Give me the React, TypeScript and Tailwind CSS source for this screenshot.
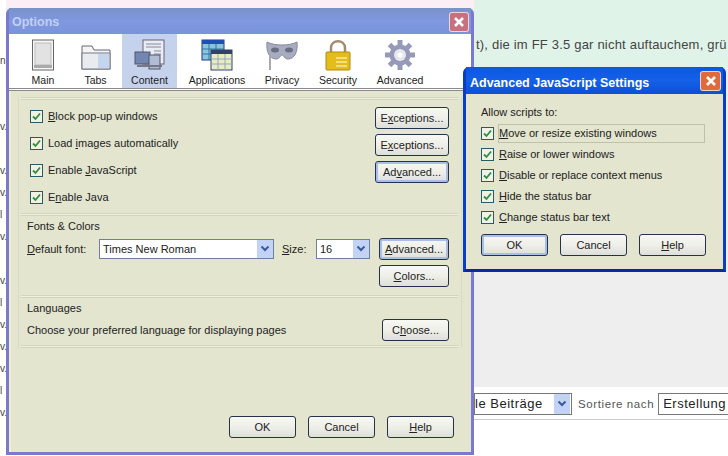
import type { ReactNode } from "react";

const face = "font-['Liberation_Sans',Arial,sans-serif]";

function Btn({ w, h = 22, def, children }: { w: string; h?: number; def?: boolean; children: ReactNode }) {
  return (
    <div
      className={`${w} flex shrink-0 items-center justify-center rounded-[3px] border border-[#26324a] bg-gradient-to-b from-[#f8f8f4] via-[#efefe9] to-[#dedfd8] text-[11px] text-[#222] ${def ? "shadow-[inset_0_0_0_2px_#a9bfe8]" : ""}`}
      style={{ height: h }}
    >
      {children}
    </div>
  );
}

function Check() {
  return (
    <span className="flex h-[13px] w-[13px] shrink-0 items-center justify-center border border-[#2c5a62] bg-[#f1f1e6]">
      <svg width="9" height="9" viewBox="0 0 9 9">
        <path d="M1 4.5 L3.5 7 L8 1.5" fill="none" stroke="#2f8f3f" strokeWidth="1.8" />
      </svg>
    </span>
  );
}

function Arrow({ w = 16 }: { w?: number }) {
  return (
    <span className="flex h-full shrink-0 items-center justify-center bg-[#c3d3f5]" style={{ width: w }}>
      <svg width="10" height="8" viewBox="0 0 10 8">
        <path d="M1.5 1.5 L5 5 L8.5 1.5" fill="none" stroke="#3b5aa0" strokeWidth="2" />
      </svg>
    </span>
  );
}

function Tab({ w, label, active, children }: { w: string; label: string; active?: boolean; children: ReactNode }) {
  return (
    <div className={`${w} flex h-[54px] shrink-0 flex-col items-center ${active ? "bg-[#c5d2ec]" : ""}`}>
      <div className="mt-[5px] h-[33px]">{children}</div>
      <span className="mt-[2px] text-[10.5px] leading-[13px] text-[#222]">{label}</span>
    </div>
  );
}

function Row({ children, mt }: { children: ReactNode; mt: string }) {
  return (
    <div className={`flex items-center gap-[5px] ${mt} h-[13px] text-[11px] text-[#222]`}>
      <Check />
      <span>{children}</span>
    </div>
  );
}

const MainIcon = (
  <svg width="24" height="32" viewBox="0 0 24 32">
    <rect x="1.5" y="1" width="21" height="30" fill="#f6f6f6" stroke="#666" />
    <rect x="4" y="4" width="16" height="22" fill="#e2e2e2" stroke="#bbb" />
    <rect x="3" y="26" width="18" height="3" fill="#aaa" />
  </svg>
);
const TabsIcon = (
  <svg width="30" height="28" viewBox="0 0 30 28" className="mt-[3px]">
    <path d="M1 4 H11 L13 8 H29 V27 H1 Z" fill="#f4f4f4" stroke="#667" />
    <rect x="1" y="11" width="28" height="16" fill="#e8ecee" stroke="#778" />
    <rect x="17" y="12" width="11" height="14" fill="#c4d6ee" />
  </svg>
);
const ContentIcon = (
  <svg width="32" height="32" viewBox="0 0 32 32">
    <rect x="9" y="1" width="21" height="24" fill="#e8edf5" stroke="#667" />
    <path d="M12 5 H27 M12 8 H27 M20 12 H27 M20 15 H27" stroke="#889" />
    <rect x="1" y="13" width="15" height="12" fill="#7186b0" stroke="#556" />
    <rect x="15" y="16" width="11" height="14" fill="#aebcd6" stroke="#556" />
    <path d="M3 27 H28" stroke="#778" strokeWidth="2" />
  </svg>
);
const AppsIcon = (
  <svg width="32" height="32" viewBox="0 0 32 32">
    <rect x="1" y="1" width="22" height="20" fill="#8cc4e0" stroke="#1e3a8a" />
    <rect x="1" y="1" width="22" height="4" fill="#1e50b8" />
    <path d="M1 10 H23 M1 15 H23 M8 5 V21 M15 5 V21" stroke="#2a7aa0" />
    <rect x="10" y="11" width="21" height="20" fill="#e6ecc4" stroke="#33406a" />
    <rect x="10" y="11" width="21" height="4" fill="#33406a" />
    <path d="M10 20 H31 M10 25 H31 M17 15 V31 M24 15 V31" stroke="#9aa5b4" />
  </svg>
);
const PrivacyIcon = (
  <svg width="34" height="32" viewBox="0 0 34 32">
    <path d="M2 3 C9 7 25 7 32 3 C33 12 30 20 23 20 C19 20 19 16 17 16 C15 16 15 20 11 20 C4 20 1 12 2 3 Z" fill="#a8acc0" stroke="#8a8a9a" />
    <ellipse cx="10" cy="11" rx="4" ry="2.5" fill="#6a6e82" />
    <ellipse cx="24" cy="11" rx="4" ry="2.5" fill="#6a6e82" />
    <path d="M5 16 V31" stroke="#aaa" strokeWidth="2" />
  </svg>
);
const SecurityIcon = (
  <svg width="28" height="32" viewBox="0 0 28 32">
    <path d="M7 14 V9 C7 0 21 0 21 9 V14" fill="none" stroke="#a08a70" strokeWidth="2.5" />
    <rect x="2" y="13" width="24" height="18" rx="1" fill="#e4bc1c" stroke="#b08c10" />
    <path d="M12 19 H23 M12 23 H23 M12 27 H23" stroke="#f8ec9a" strokeWidth="1.5" />
  </svg>
);
const AdvancedIcon = (
  <svg width="32" height="32" viewBox="0 0 32 32">
    <g stroke="#9699b8" strokeWidth="5">
      <path d="M16 1 V31 M1 16 H31 M5.5 5.5 L26.5 26.5 M26.5 5.5 L5.5 26.5" />
    </g>
    <circle cx="16" cy="16" r="10.5" fill="#9699b8" />
    <circle cx="16" cy="16" r="6" fill="#e6e8ee" />
    <circle cx="16" cy="16" r="2.5" fill="#fff" />
  </svg>
);

function CloseBtn({ bg, w }: { bg: string; w: string }) {
  return (
    <span className={`${bg} ${w} flex h-[20px] items-center justify-center rounded-[3px] border border-white/70`}>
      <svg width="12" height="12" viewBox="0 0 12 12">
        <path d="M2 2 L10 10 M10 2 L2 10" stroke="#fff" strokeWidth="2.6" />
      </svg>
    </span>
  );
}

function Rule() {
  return <div className="h-[3px] border-y border-[#d2d4bc] bg-[#eff0e0]" />;
}

function OptionsWindow() {
  return (
    <div className="absolute left-[6px] top-[8px] flex h-[447px] w-[468px] flex-col rounded-t-[6px] border-x-[3px] border-b-[3px] border-[#7b78cf] bg-[#e3e5cf]">
      <div className="flex h-[26px] shrink-0 items-center justify-between bg-gradient-to-b from-[#7a92c8] via-[#7f98e0] to-[#7a94dc] pl-[3px] pr-[2px] pt-[2px]">
        <span className="text-[12.5px] font-bold text-[#c3cff0]">Options</span>
        <CloseBtn bg="bg-[#c9707e]" w="w-[20px]" />
      </div>
      <div className="flex h-[54px] shrink-0 items-end bg-white pl-[8px]">
        <Tab w="w-[52px]" label="Main">{MainIcon}</Tab>
        <Tab w="w-[53px]" label="Tabs">{TabsIcon}</Tab>
        <Tab w="w-[55px]" label="Content" active>{ContentIcon}</Tab>
        <Tab w="w-[80px]" label="Applications">{AppsIcon}</Tab>
        <Tab w="w-[50px]" label="Privacy">{PrivacyIcon}</Tab>
        <Tab w="w-[62px]" label="Security">{SecurityIcon}</Tab>
        <Tab w="w-[62px]" label="Advanced">{AdvancedIcon}</Tab>
      </div>
      <div className="h-[3px] shrink-0 border-y border-[#8a8a8a] bg-white" />
      <div className="flex flex-1 flex-col border-l-2 border-[#eef0c8] pl-[7px] pr-[9px] pt-[6px]">
        <div className="flex flex-col border-x border-[#d9dbc3] bg-[#e3e5cf] pl-[2px] pr-[3px]">
          <Rule />
          <div className="flex h-[113px] justify-between pl-[9px] pr-[9px]">
            <div className="flex flex-col">
              <Row mt="mt-[10px]"><u>B</u>lock pop-up windows</Row>
              <Row mt="mt-[14px]">Load <u>i</u>mages automatically</Row>
              <Row mt="mt-[14px]">Enable <u>J</u>avaScript</Row>
              <Row mt="mt-[14px]">E<u>n</u>able Java</Row>
            </div>
            <div className="flex flex-col gap-[5px] pt-[7px]">
              <Btn w="w-[74px]">E<u>x</u>ceptions...</Btn>
              <Btn w="w-[74px]">E<u>x</u>ceptions...</Btn>
              <Btn w="w-[74px]" def>Ad<u>v</u>anced...</Btn>
            </div>
          </div>
          <Rule />
          <div className="mt-[3px] h-[72px] pl-[6px] pr-[9px]">
            <div className="text-[11px] leading-[14px] text-[#222]">Fonts &amp; Colors</div>
            <div className="mt-[5px] flex items-start">
              <div className="mt-[1px] flex h-[20px] w-[72px] items-center text-[11px] text-[#222]"><u>D</u>efault font:</div>
              <div className="mt-[1px] flex h-[20px] w-[175px] items-center border border-[#6f7f9c] bg-white pl-[3px] text-[11px] text-[#222]">
                <span className="flex-1">Times New Roman</span>
                <Arrow />
              </div>
              <div className="ml-[8px] mt-[1px] flex h-[20px] w-[34px] items-center text-[11px] text-[#222]"><u>S</u>ize:</div>
              <div className="mt-[1px] flex h-[20px] w-[54px] items-center border border-[#6f7f9c] bg-white pl-[3px] text-[11px] text-[#222]">
                <span className="flex-1">16</span>
                <Arrow />
              </div>
              <div className="ml-auto flex flex-col gap-[5px]">
                <Btn w="w-[70px]" def><u>A</u>dvanced...</Btn>
                <Btn w="w-[70px]"><u>C</u>olors...</Btn>
              </div>
            </div>
          </div>
          <div className="mt-[4px]"><Rule /></div>
          <div className="flex h-[47px] items-start justify-between pl-[6px] pr-[9px]">
            <div className="flex flex-col">
              <span className="mt-[3px] text-[11px] leading-[14px] text-[#222]">Languages</span>
              <span className="mt-[8px] text-[11px] leading-[14px] text-[#222]">Choose your preferred language for displaying pages</span>
            </div>
            <div className="pt-[21px]">
              <Btn w="w-[67px]">C<u>h</u>oose...</Btn>
            </div>
          </div>
          <Rule />
        </div>
        <div className="mt-auto flex justify-end gap-[12px] pb-[14px] pr-[8px]">
          <Btn w="w-[67px]">OK</Btn>
          <Btn w="w-[67px]">Cancel</Btn>
          <Btn w="w-[67px]"><u>H</u>elp</Btn>
        </div>
      </div>
    </div>
  );
}

function JsWindow() {
  const rows: ReactNode[] = [
    <><u>M</u>ove or resize existing windows</>,
    <><u>R</u>aise or lower windows</>,
    <><u>D</u>isable or replace context menus</>,
    <><u>H</u>ide the status bar</>,
    <><u>C</u>hange status bar text</>,
  ];
  return (
    <div className="absolute left-[463px] top-[67px] flex h-[205px] w-[263px] flex-col rounded-t-[6px] border-x-[3px] border-b-[3px] border-x-[#0a3fc0] border-b-[#0a2a9c] bg-[#e3e5cf]">
      <div className="flex h-[27px] shrink-0 items-center justify-between bg-gradient-to-b from-[#0a58e0] via-[#1560e8] to-[#0a50d8] pl-[4px] pr-[2px]">
        <span className="pt-[5px] text-[12.5px] font-bold text-white">Advanced JavaScript Settings</span>
        <CloseBtn bg="bg-[#e06a3a]" w="w-[21px]" />
      </div>
      <div className="flex flex-1 flex-col pl-[15px]">
        <div className="mt-[11px] text-[11px] leading-[14px] text-[#222]">Allow scripts to:</div>
        <div className="mt-[8px] flex flex-col gap-[8px]">
          {rows.map((r, i) => (
            <div key={i} className="flex h-[13px] items-center gap-[5px] text-[11px] text-[#222]">
              <Check />
              <span className={i === 0 ? "w-[205px] outline outline-1 outline-[#bfc1aa]" : ""}>{r}</span>
            </div>
          ))}
        </div>
        <div className="mt-[10px] flex gap-[12px]">
          <Btn w="w-[67px]" def>OK</Btn>
          <Btn w="w-[67px]">Cancel</Btn>
          <Btn w="w-[67px]"><u>H</u>elp</Btn>
        </div>
      </div>
    </div>
  );
}

// scraps of the page list that stick out left of the dialog
const scraps = ["n", "", "", "v.", "", "v.", "v.", "l", "v.", "", "v.", "l", "v.", "v.", "v.", "l", "v."];

export default function App() {
  return (
    <div className={`${face} relative flex h-[456px] w-[728px] overflow-hidden bg-white`}>
      <div className="flex w-[6px] shrink-0 flex-col pt-[50px] text-[10px] leading-[22px] text-[#445]">
        {scraps.map((s, i) => (
          <span key={i} className="h-[22px] overflow-hidden">{s || "\u00a0"}</span>
        ))}
      </div>
      {/* page behind the dialogs */}
      <div className="flex flex-1 flex-col">
        <div className="flex h-[68px] bg-[#e0f3e9]">
          <div className="h-[8px] w-[468px] shrink-0 bg-[#fbeff5]" />
          <span className="whitespace-nowrap pl-[2px] pt-[37px] text-[13px] leading-[16px] tracking-[0.2px] text-[#444]">t), die im FF 3.5 gar nicht auftauchem, grü</span>
        </div>
        <div className="h-[319px] bg-[#eeeeee]" />
        <div className="h-[6px] bg-white" />
        <div className="flex h-[27px] items-start border-b border-[#ccc] pl-[468px] text-[13px] text-[#222]">
          <div className="flex h-[22px] w-[98px] shrink-0 items-center justify-between border border-[#777] pr-[1px]">
            <span className="tracking-[0.5px]">le Beiträge</span>
            <Arrow />
          </div>
          <span className="ml-[6px] whitespace-nowrap pt-[3px] text-[11.5px] tracking-[0.6px] text-[#555]">Sortiere nach</span>
          <div className="ml-[4px] flex h-[22px] flex-1 items-center overflow-hidden border-y border-l border-[#777] pl-[4px] tracking-[0.5px]">Erstellung</div>
        </div>
      </div>
      <OptionsWindow />
      <JsWindow />
    </div>
  );
}
